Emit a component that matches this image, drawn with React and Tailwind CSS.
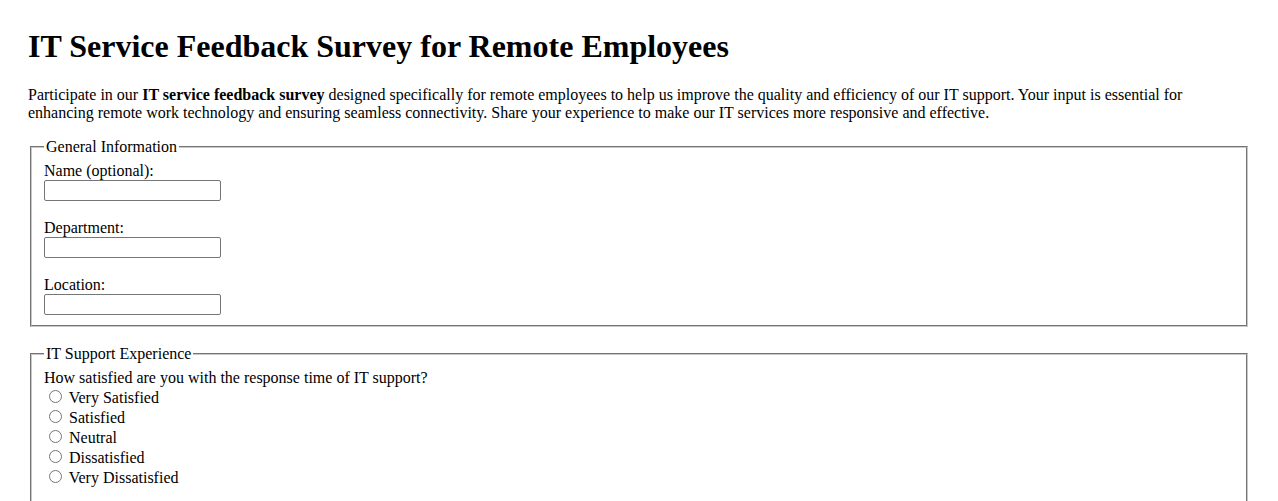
const satisfaction = ['Very Satisfied', 'Satisfied', 'Neutral', 'Dissatisfied', 'Very Dissatisfied'];

function TextField({ label, id, last }) {
  return (
    <div className={last ? '' : 'mb-[18px]'}>
      <label htmlFor={id} className="block">{label}</label>
      <input
        id={id}
        type="text"
        className="w-[177px] h-[21px] border border-[#767676] rounded-[2px] bg-white px-[2px] py-[1px] text-[13.33px] align-baseline"
      />
    </div>
  );
}

function RadioGroup({ question, name, options }) {
  return (
    <div className="mb-4">
      <p>{question}</p>
      {options.map(opt => (
        <div key={opt}>
          <label>
            <input type="radio" name={name} value={opt} className="m-[3px_3px_0_5px] w-[13px] h-[13px] align-baseline" />{' '}
            {opt}
          </label>
        </div>
      ))}
    </div>
  );
}

export default function App() {
  return (
    <div className="bg-white text-black text-base leading-[normal] px-[28px] pt-[28px] pb-8" style={{ fontFamily: '"Liberation Serif", "Times New Roman", serif' }}>
      <h1 className="text-[32px] font-bold mb-[21.44px]">IT Service Feedback Survey for Remote Employees</h1>
      <p className="mb-4">
        Participate in our <strong>IT service feedback survey</strong> designed specifically for remote employees to help us improve the quality and efficiency of our IT support. Your input is essential for enhancing remote work technology and ensuring seamless connectivity. Share your experience to make our IT services more responsive and effective.
      </p>

      <form>
        <fieldset className="mx-[2px] border-2 [border-style:groove] border-[#c8c8c8] px-3 pt-[5.6px] pb-[10px] mb-[18px]">
          <legend className="px-[2px]">General Information</legend>
          <TextField label="Name (optional):" id="name" />
          <TextField label="Department:" id="department" />
          <TextField label="Location:" id="location" last />
        </fieldset>

        <fieldset className="mx-[2px] border-2 [border-style:groove] border-[#c8c8c8] px-3 pt-[5.6px] pb-[10px] mb-[18px]">
          <legend className="px-[2px]">IT Support Experience</legend>
          <RadioGroup question="How satisfied are you with the response time of IT support?" name="response" options={satisfaction} />
          <RadioGroup question="How satisfied are you with the resolution of your IT issues?" name="resolution" options={satisfaction} />
          <RadioGroup question="How would you rate the professionalism of IT staff?" name="professionalism" options={satisfaction} />
        </fieldset>
      </form>
    </div>
  );
}
